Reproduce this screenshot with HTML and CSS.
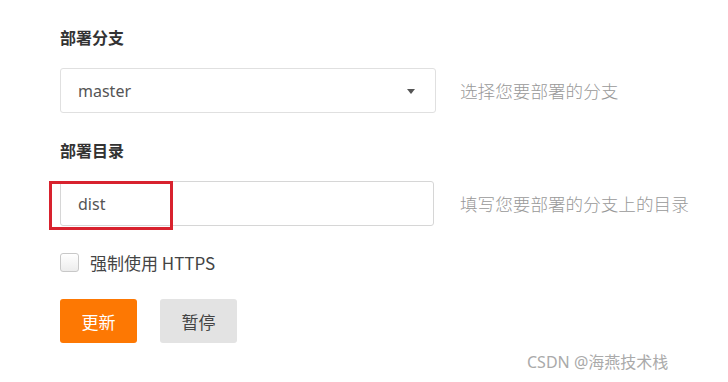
FILE: index.html
```html
<!DOCTYPE html>
<html lang="zh">
<head>
<meta charset="utf-8">
<title>部署设置</title>
<link rel="stylesheet" href="styles.css">
</head>
<body>
<div class="form">
  <div class="label">部署分支</div>
  <div class="row">
    <div class="select">
      <span class="value">master</span>
      <span class="caret"></span>
    </div>
    <span class="hint">选择您要部署的分支</span>
  </div>

  <div class="label label-second">部署目录</div>
  <div class="row">
    <div class="input-wrap">
      <div class="input"><span class="value">dist</span></div>
      <div class="highlight"></div>
    </div>
    <span class="hint hint-second">填写您要部署的分支上的目录</span>
  </div>

  <label class="check-row">
    <span class="checkbox"></span>
    <span class="check-text">强制使用 HTTPS</span>
  </label>

  <div class="buttons">
    <button class="btn btn-primary">更新</button>
    <button class="btn btn-default">暂停</button>
  </div>
</div>
<div class="watermark">CSDN @海燕技术栈</div>
</body>
</html>
```

FILE: styles.css
```css
html, body {
  margin: 0;
  padding: 0;
  background: #ffffff;
  width: 728px;
  height: 382px;
  overflow: hidden;
  position: relative;
  font-family: "Noto Sans", "Noto Sans CJK SC", sans-serif;
}

.form {
  display: flex;
  flex-direction: column;
  align-items: flex-start;
  padding: 27px 0 0 60px;
}

.label {
  font-family: "Noto Sans CJK SC", sans-serif;
  font-size: 16px;
  font-weight: 700;
  line-height: 20px;
  color: #333333;
  margin-bottom: 21px;
}

.label-second {
  margin-top: 27px;
}

.row {
  display: flex;
  align-items: center;
  height: 45px;
}

.select {
  box-sizing: border-box;
  width: 376px;
  height: 45px;
  border: 1px solid #e0e0e0;
  border-radius: 3px;
  display: flex;
  align-items: center;
  justify-content: space-between;
  padding: 0 20px 0 17px;
}

.value {
  font-family: "Noto Sans", "Noto Sans CJK SC", sans-serif;
  font-size: 16px;
  color: #555555;
}

.caret {
  width: 0;
  height: 0;
  border-left: 4px solid transparent;
  border-right: 4px solid transparent;
  border-top: 5px solid #555555;
  margin-top: 2px;
}

.hint {
  font-family: "Noto Sans CJK SC", sans-serif;
  font-size: 17.6px;
  font-weight: 300;
  color: #999999;
  margin-left: 24px;
}

.hint-second {
  margin-left: 26px;
}

.input-wrap {
  position: relative;
}

.input {
  box-sizing: border-box;
  width: 374px;
  height: 45px;
  border: 1px solid #d6d6d6;
  border-radius: 3px;
  display: flex;
  align-items: center;
  padding-left: 17px;
}

.highlight {
  position: absolute;
  left: -11px;
  top: 0;
  width: 124px;
  height: 49px;
  box-sizing: border-box;
  border: 3px solid #d8222e;
}

.check-row {
  display: flex;
  align-items: center;
  margin-top: 25px;
  height: 22px;
}

.checkbox {
  box-sizing: border-box;
  width: 19px;
  height: 19px;
  border: 1px solid #c8c8c8;
  border-radius: 3px;
  background: linear-gradient(#ffffff, #ececec);
}

.check-text {
  font-family: "Noto Sans CJK SC", sans-serif;
  font-size: 17px;
  color: #444444;
  margin-left: 11px;
}

.buttons {
  display: flex;
  gap: 23px;
  margin-top: 26px;
}

.btn {
  width: 77px;
  height: 44px;
  border: none;
  border-radius: 3px;
  font-family: "Noto Sans CJK SC", sans-serif;
  font-size: 17px;
  padding: 0;
}

.btn-primary {
  background: #fd7803;
  color: #ffffff;
}

.btn-default {
  background: #e3e3e3;
  color: #444444;
}

.watermark {
  position: absolute;
  left: 527px;
  top: 349px;
  font-family: "Noto Sans", "Noto Sans CJK SC", sans-serif;
  font-size: 16px;
  color: #aaaaaa;
}
```
